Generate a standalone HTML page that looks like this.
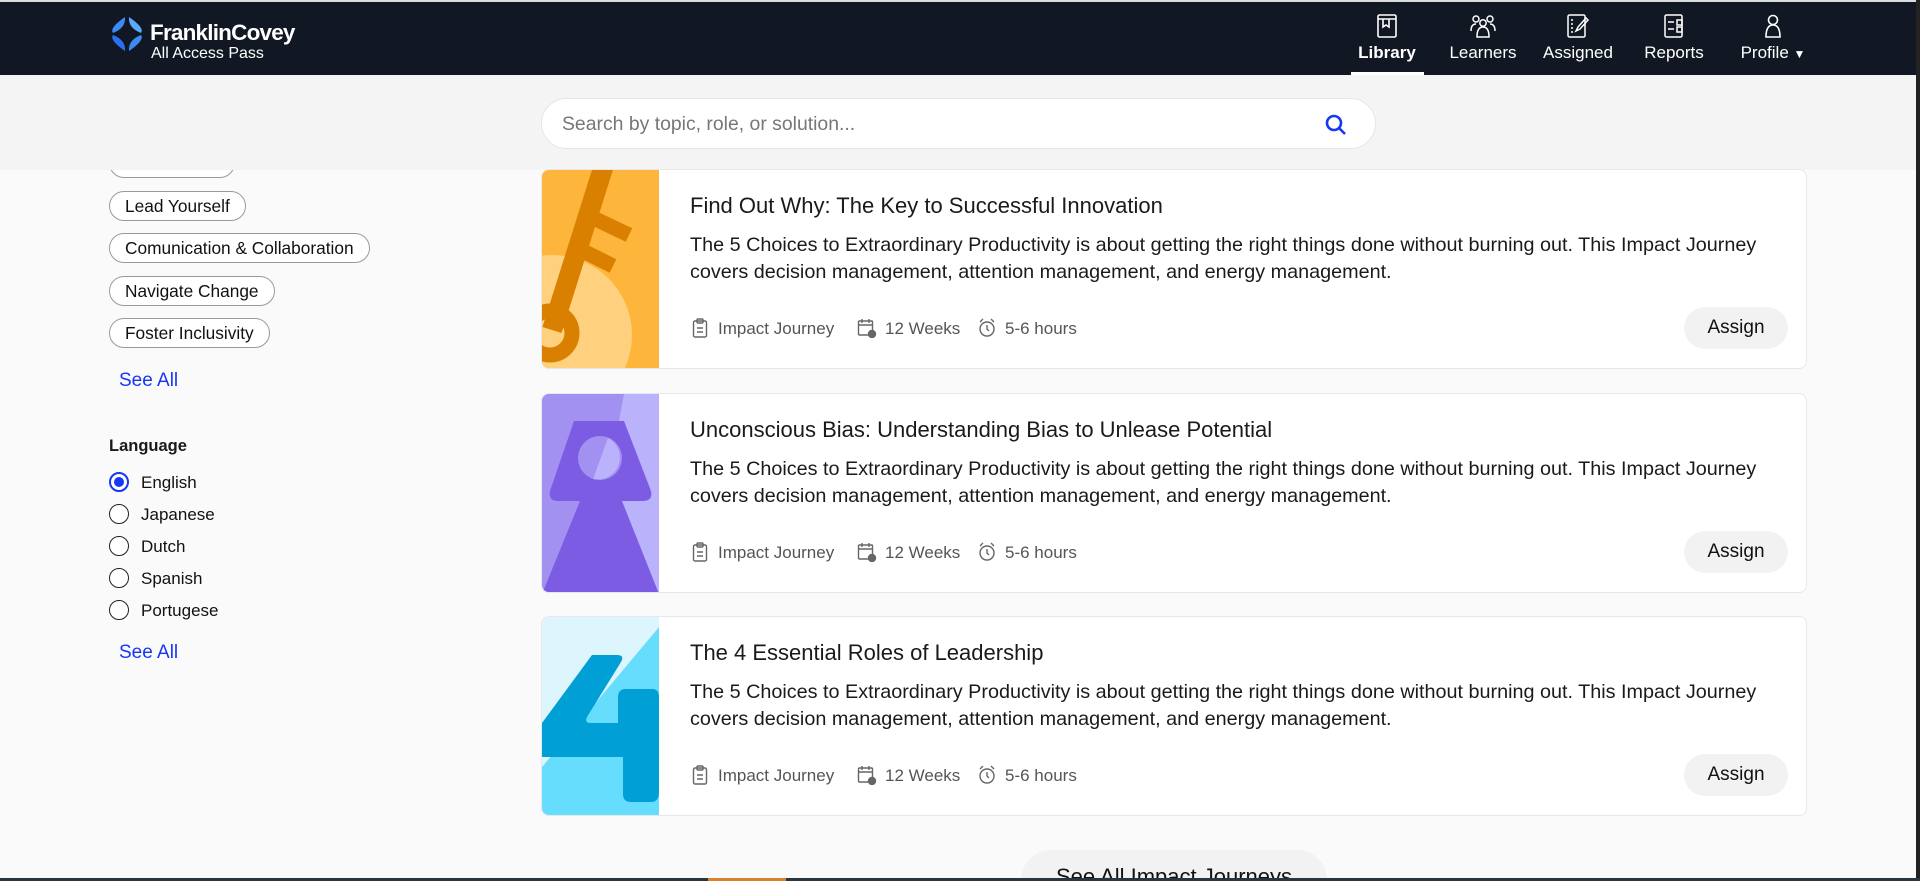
<!DOCTYPE html>
<html style="overflow:hidden;width:1920px;height:881px"><head><meta charset="utf-8"><style>
*{box-sizing:border-box;margin:0;padding:0}
html,body{overflow:hidden}
body{width:1920px;height:881px;background:#fafafa;font-family:"Liberation Sans",sans-serif;position:relative;color:#1a1a1a}
#wrap{position:absolute;left:0;top:0;width:1920px;height:881px;overflow:hidden}
.nav{position:absolute;left:0;top:0;width:1920px;height:75px;background:#111823;border-top:2px solid #dcdcdc}
.logo{position:absolute;left:109px;top:14px}
.brand{position:absolute;left:150px;top:18px;color:#fff;font-weight:bold;font-size:22.5px;letter-spacing:-0.8px}
.sub{position:absolute;left:151px;top:43px;color:#fff;font-size:16px}
.ni{position:absolute;top:12px;color:#fff;font-size:17px;text-align:center;width:110px}
.ni svg{display:block;margin:0 auto 5px}
.ul{position:absolute;left:1351px;top:70px;width:73px;height:5px;background:#fff}
.band{position:absolute;left:0;top:75px;width:1916px;height:95px;background:#f4f4f4}
.search{position:absolute;left:541px;top:98px;width:835px;height:51px;background:#fff;border:1px solid #e6e6e6;border-radius:26px}
.search span{position:absolute;left:20px;top:14px;font-size:19.4px;color:#777}
.pill{position:absolute;left:109px;height:30px;border:1px solid #9a9a9a;border-radius:15px;font-size:17.3px;padding:0 15px;line-height:28px;background:#fff;color:#111}
.see{position:absolute;left:119px;color:#1638f5;font-size:19px}
.radio{position:absolute;left:109px;width:20px;height:20px;border:1.5px solid #222;border-radius:50%;background:#fff}
.rl{position:absolute;left:141px;font-size:17px;color:#111}
.card{position:absolute;left:541px;width:1266px;height:200px;background:#fff;border:1.5px solid #e8e8e8;border-radius:8px;overflow:hidden}
.card svg.im{position:absolute;left:0;top:0}
.t{position:absolute;left:148px;top:23px;font-size:22px;color:#1a1a1a}
.d{position:absolute;left:148px;top:62px;font-size:19.8px;line-height:27px;color:#1a1a1a;width:1090px;white-space:nowrap}
.m{position:absolute;top:149px;font-size:17px;color:#555}
.mi{position:absolute;top:148px}
.as{position:absolute;left:1142px;top:137px;width:104px;height:42px;border-radius:21px;background:#f2f2f2;font-size:19px;text-align:center;line-height:42px;color:#111}
</style></head><body><div id="wrap">
<div class="nav">
<svg class="logo" width="36" height="36" viewBox="0 0 36 36"><path d="M16 1 Q17 12 4 17 Q0 12 16 1Z" fill="#3d8af7"/><path d="M20 1 Q19 12 32 17 Q36 12 20 1Z" fill="#5aa8ff"/><path d="M4 19 Q17 24 16 35 Q0 24 4 19Z" fill="#2c6ef2"/><path d="M32 19 Q19 24 20 35 Q36 24 32 19Z" fill="#3d8af7"/></svg>
<div class="brand">FranklinCovey</div><div class="sub">All Access Pass</div>
<div class="ni" style="left:1332px;font-weight:bold"><svg width="22" height="24" viewBox="0 0 22 24" fill="none" stroke="#fff" stroke-width="1.6"><rect x="2" y="1" width="18" height="22" rx="1.5"/><path d="M2 5h18M7 5v8l3-2 3 2V5"/></svg>Library</div>
<div class="ni" style="left:1428px"><svg width="28" height="24" viewBox="0 0 28 24" fill="none" stroke="#fff" stroke-width="1.5"><circle cx="7" cy="5" r="3"/><circle cx="21" cy="5" r="3"/><circle cx="14" cy="9" r="3.2"/><path d="M2 17q0-7 5-7M26 17q0-7-5-7M8 23q0-10 6-10t6 10z"/></svg>Learners</div>
<div class="ni" style="left:1523px"><svg width="24" height="24" viewBox="0 0 24 24" fill="none" stroke="#fff" stroke-width="1.5"><rect x="2" y="1" width="17" height="22" rx="1.5"/><path d="M5 6h2M5 10h2M5 14h2M5 18h2M10 17l2-4 8-9 2 2-8 9z"/></svg>Assigned</div>
<div class="ni" style="left:1619px"><svg width="22" height="24" viewBox="0 0 22 24" fill="none" stroke="#fff" stroke-width="1.5"><rect x="2" y="1" width="17" height="22" rx="1.5"/><path d="M5 8h6M5 15h6M14 6h5v5h-5zM14 13h5v5h-5z"/></svg>Reports</div>
<div class="ni" style="left:1718px"><svg width="18" height="24" viewBox="0 0 18 24" fill="none" stroke="#fff" stroke-width="1.6"><circle cx="9" cy="6" r="4.5"/><path d="M2 23q0-12 7-12t7 12z"/></svg>Profile <span style="font-size:12px">▼</span></div>
<div class="ul"></div>
</div>
<div style="position:absolute;right:0;top:0;width:4px;height:881px;background:#222"></div>
<div class="pill" style="top:148px;width:126px"></div>
<div class="band"></div>
<div class="search"><span>Search by topic, role, or solution...</span><svg style="position:absolute;left:782px;top:14px" width="24" height="24" viewBox="0 0 24 24" fill="none" stroke="#1638f5" stroke-width="2.6"><circle cx="10" cy="10" r="7"/><path d="M15 15l6 6"/></svg></div>
<div class="pill" style="top:191px">Lead Yourself</div>
<div class="pill" style="top:233px">Comunication &amp; Collaboration</div>
<div class="pill" style="top:276px">Navigate Change</div>
<div class="pill" style="top:318px">Foster Inclusivity</div>
<div class="see" style="top:370px">See All</div>
<div style="position:absolute;left:109px;top:437px;font-size:16.5px;font-weight:bold">Language</div>
<div class="radio" style="top:472px;border-color:#1638f5;border-width:2px"><div style="position:absolute;left:3px;top:3px;width:10px;height:10px;border-radius:50%;background:#1638f5"></div></div><div class="rl" style="top:473px">English</div>
<div class="radio" style="top:504px"></div><div class="rl" style="top:505px">Japanese</div>
<div class="radio" style="top:536px"></div><div class="rl" style="top:537px">Dutch</div>
<div class="radio" style="top:568px"></div><div class="rl" style="top:569px">Spanish</div>
<div class="radio" style="top:600px"></div><div class="rl" style="top:601px">Portugese</div>
<div class="see" style="top:642px">See All</div>

<div class="card" style="top:169px">
<svg class="im" width="117" height="200" viewBox="0 0 117 200"><rect width="117" height="200" fill="#fdb53c"/><circle cx="10" cy="165" r="80" fill="#ffd07e"/><path d="M10 160 L62 -5" stroke="#d98000" stroke-width="20"/><path d="M45 45l42 20M35 78l36 18" stroke="#d98000" stroke-width="15"/><circle cx="8" cy="163" r="22" fill="none" stroke="#d98000" stroke-width="15"/></svg>
<div class="t">Find Out Why: The Key to Successful Innovation</div>
<div class="d">The 5 Choices to Extraordinary Productivity is about getting the right things done without burning out. This Impact Journey<br>covers decision management, attention management, and energy management.</div>
</div>
<div class="card" style="top:393px">
<svg class="im" width="117" height="200" viewBox="0 0 117 200"><rect width="117" height="200" fill="#a291f1"/><path d="M82 0H117V200H45Z" fill="#bab2fa"/><path d="M32 27h50l27 70q2 10-8 10H80l37 93H0l38-93H16q-10 0-8-10z" fill="#7c5ce2"/><circle cx="58" cy="64" r="22" fill="#a291f1"/><path d="M66 44a22 22 0 0 1-15 41z" fill="#bab2fa"/></svg>
<div class="t">Unconscious Bias: Understanding Bias to Unlease Potential</div>
<div class="d">The 5 Choices to Extraordinary Productivity is about getting the right things done without burning out. This Impact Journey<br>covers decision management, attention management, and energy management.</div>
</div>
<div class="card" style="top:616px">
<svg class="im" width="117" height="200" viewBox="0 0 117 200"><rect width="117" height="200" fill="#ddf5fc"/><path d="M117 10V200H0V150Z" fill="#67ddfd"/><path d="M50 38h25q8 0 4 7L45 100q-3 6 4 6h27V80q0-8 8-8h26q7 0 7 8v95q0 10-8 10H89q-8 0-8-8v-37H0v-34z" fill="#009fd5"/></svg>
<div class="t">The 4 Essential Roles of Leadership</div>
<div class="d">The 5 Choices to Extraordinary Productivity is about getting the right things done without burning out. This Impact Journey<br>covers decision management, attention management, and energy management.</div>
</div>

<div style="position:absolute;left:1021px;top:850px;width:306px;height:60px;border-radius:30px;background:#f2f2f2;font-size:22px;text-align:center;padding-top:14px;color:#111">See All Impact Journeys</div>
<div style="position:absolute;left:0;top:878px;width:1920px;height:3px;background:#2b3540"></div>
<div style="position:absolute;left:708px;top:878px;width:78px;height:3px;background:#d9822b"></div>
</div>
<script>
document.querySelectorAll('.card').forEach(c=>{
c.insertAdjacentHTML('beforeend',`
<svg class="mi" style="left:150px" width="16" height="20" viewBox="0 0 16 20" fill="none" stroke="#666" stroke-width="1.4"><rect x="1.5" y="3" width="13" height="16" rx="1.5"/><rect x="5" y="1" width="6" height="4" rx="1"/><path d="M5 10h6M5 14h6"/></svg>
<div class="m" style="left:176px">Impact Journey</div>
<svg class="mi" style="left:315px" width="20" height="20" viewBox="0 0 20 20" fill="none" stroke="#666" stroke-width="1.4"><rect x="1.5" y="3" width="14" height="14" rx="1"/><path d="M1.5 7h14M5 1v4M12 1v4"/><circle cx="15" cy="16" r="3.5" fill="#666"/></svg>
<div class="m" style="left:343px">12 Weeks</div>
<svg class="mi" style="left:436px" width="18" height="20" viewBox="0 0 18 20" fill="none" stroke="#666" stroke-width="1.4"><circle cx="9" cy="11" r="7"/><path d="M9 7v4l2 2M2 4l3-3M16 4l-3-3"/></svg>
<div class="m" style="left:463px">5-6 hours</div>
<div class="as">Assign</div>`);
});
</script>
</body></html>
